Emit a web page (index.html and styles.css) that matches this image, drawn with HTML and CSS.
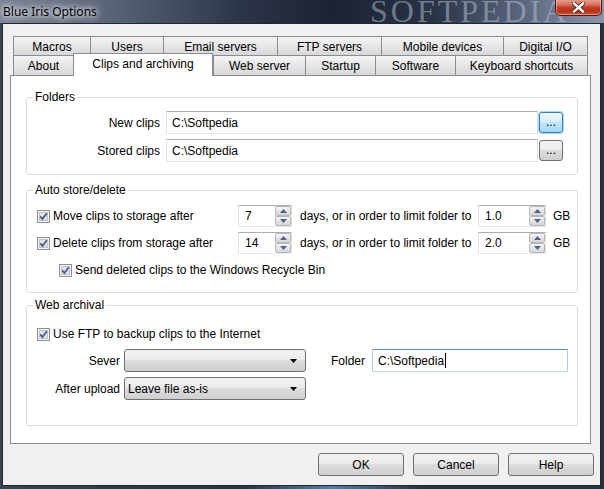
FILE: index.html
```html
<!DOCTYPE html>
<html lang="en">
<head>
    <meta charset="UTF-8">
    <title>Blue Iris Options</title>
<link rel="stylesheet" href="styles.css">
</head>
<body>
<div class="window">
    <div class="titlebar">
        <span class="title">Blue Iris Options</span>
        <span class="watermark">SOFTPEDIA</span>
        <button class="close">
            <svg width="13" height="11" viewBox="0 0 13 11">
                <path d="M2 1.5 L11 9.5 M11 1.5 L2 9.5" stroke="#3a2a28" stroke-width="4.2" stroke-linecap="square"/>
                <path d="M2 1.5 L11 9.5 M11 1.5 L2 9.5" stroke="#fff" stroke-width="2.4" stroke-linecap="square"/>
            </svg>
        </button>
    </div>

    <div class="client">
        <div class="tabs">
            <div class="tab-row top">
                <div class="tab">Macros</div>
                <div class="tab">Users</div>
                <div class="tab">Email servers</div>
                <div class="tab">FTP servers</div>
                <div class="tab">Mobile devices</div>
                <div class="tab last">Digital I/O</div>
            </div>
            <div class="tab-row bottom">
                <div class="tab">About</div>
                <div class="tab selected">Clips and archiving</div>
                <div class="tab">Web server</div>
                <div class="tab">Startup</div>
                <div class="tab">Software</div>
                <div class="tab last">Keyboard shortcuts</div>
            </div>
        </div>

        <div class="panel">
            <fieldset class="group folders">
                <legend>Folders</legend>
                <div class="field-row">
                    <span class="field-label">New clips</span>
                    <div class="textbox">C:\Softpedia</div>
                    <button class="browse focus">...</button>
                </div>
                <div class="field-row">
                    <span class="field-label">Stored clips</span>
                    <div class="textbox">C:\Softpedia</div>
                    <button class="browse">...</button>
                </div>
            </fieldset>

            <fieldset class="group auto">
                <legend>Auto store/delete</legend>
                <div class="group-body">
                    <div class="spin-row">
                        <label class="check">
                            <svg class="box" width="13" height="13" viewBox="0 0 13 13"><rect x="0.5" y="0.5" width="12" height="12" fill="#f4f4f4" stroke="#8e8f8f"/><rect x="2.5" y="2.5" width="8" height="8" fill="#e2e2e2" stroke="#c4c4c4"/><path d="M3.3 6.4 L5.4 9 L9.8 3.2" fill="none" stroke="#3f5a9a" stroke-width="1.7"/></svg>
                            Move clips to storage after
                        </label>
                        <div class="spin"><span class="val">7</span><span class="arrows"><span class="spin-btn"><svg width="7" height="4" viewBox="0 0 7 4"><path d="M0 4 L3.5 0 L7 4Z" fill="#4f628f"/></svg></span><span class="spin-btn"><svg width="7" height="4" viewBox="0 0 7 4"><path d="M0 0 L3.5 4 L7 0Z" fill="#4f628f"/></svg></span></span></div>
                        <span class="days">days, or in order to limit folder to</span>
                        <div class="spin wide"><span class="val">1.0</span><span class="arrows"><span class="spin-btn"><svg width="7" height="4" viewBox="0 0 7 4"><path d="M0 4 L3.5 0 L7 4Z" fill="#4f628f"/></svg></span><span class="spin-btn"><svg width="7" height="4" viewBox="0 0 7 4"><path d="M0 0 L3.5 4 L7 0Z" fill="#4f628f"/></svg></span></span></div>
                        <span class="unit">GB</span>
                    </div>
                    <div class="spin-row">
                        <label class="check">
                            <svg class="box" width="13" height="13" viewBox="0 0 13 13"><rect x="0.5" y="0.5" width="12" height="12" fill="#f4f4f4" stroke="#8e8f8f"/><rect x="2.5" y="2.5" width="8" height="8" fill="#e2e2e2" stroke="#c4c4c4"/><path d="M3.3 6.4 L5.4 9 L9.8 3.2" fill="none" stroke="#3f5a9a" stroke-width="1.7"/></svg>
                            Delete clips from storage after
                        </label>
                        <div class="spin"><span class="val">14</span><span class="arrows"><span class="spin-btn"><svg width="7" height="4" viewBox="0 0 7 4"><path d="M0 4 L3.5 0 L7 4Z" fill="#4f628f"/></svg></span><span class="spin-btn"><svg width="7" height="4" viewBox="0 0 7 4"><path d="M0 0 L3.5 4 L7 0Z" fill="#4f628f"/></svg></span></span></div>
                        <span class="days">days, or in order to limit folder to</span>
                        <div class="spin wide"><span class="val">2.0</span><span class="arrows"><span class="spin-btn"><svg width="7" height="4" viewBox="0 0 7 4"><path d="M0 4 L3.5 0 L7 4Z" fill="#4f628f"/></svg></span><span class="spin-btn"><svg width="7" height="4" viewBox="0 0 7 4"><path d="M0 0 L3.5 4 L7 0Z" fill="#4f628f"/></svg></span></span></div>
                        <span class="unit">GB</span>
                    </div>
                    <label class="check recycle">
                        <svg class="box" width="13" height="13" viewBox="0 0 13 13"><rect x="0.5" y="0.5" width="12" height="12" fill="#f4f4f4" stroke="#8e8f8f"/><rect x="2.5" y="2.5" width="8" height="8" fill="#e2e2e2" stroke="#c4c4c4"/><path d="M3.3 6.4 L5.4 9 L9.8 3.2" fill="none" stroke="#3f5a9a" stroke-width="1.7"/></svg>
                        Send deleted clips to the Windows Recycle Bin
                    </label>
                </div>
            </fieldset>

            <fieldset class="group web">
                <legend>Web archival</legend>
                <div class="group-body">
                    <label class="check">
                        <svg class="box" width="13" height="13" viewBox="0 0 13 13"><rect x="0.5" y="0.5" width="12" height="12" fill="#f4f4f4" stroke="#8e8f8f"/><rect x="2.5" y="2.5" width="8" height="8" fill="#e2e2e2" stroke="#c4c4c4"/><path d="M3.3 6.4 L5.4 9 L9.8 3.2" fill="none" stroke="#3f5a9a" stroke-width="1.7"/></svg>
                        Use FTP to backup clips to the Internet
                    </label>
                    <div class="web-row first">
                        <span class="field-label">Sever</span>
                        <div class="select"><span></span><svg width="7" height="4" viewBox="0 0 7 4"><path d="M0 0 L3.5 4 L7 0Z" fill="#000"/></svg></div>
                        <span class="folder-label">Folder</span>
                        <div class="textbox active">C:\Softpedia<span class="caret"></span></div>
                    </div>
                    <div class="web-row">
                        <span class="field-label">After upload</span>
                        <div class="select"><span>Leave file as-is</span><svg width="7" height="4" viewBox="0 0 7 4"><path d="M0 0 L3.5 4 L7 0Z" fill="#000"/></svg></div>
                    </div>
                </div>
            </fieldset>
        </div>

        <div class="actions">
            <button class="btn">OK</button>
            <button class="btn">Cancel</button>
            <button class="btn">Help</button>
        </div>
    </div>
</div>
</body>
</html>
```

FILE: styles.css
```css
*{box-sizing:border-box;}
body{margin:0;width:604px;height:489px;overflow:hidden;font:12px "Liberation Sans",Arial,sans-serif;color:#000;background:#2a303c;}

.window{height:489px;display:flex;flex-direction:column;
    background:linear-gradient(90deg,#3b4252 0%,#2a303c 40%,#5a7da0 55%,#2a303c 70%,#2a303c 100%);}

/* title bar */
.titlebar{height:23px;flex:none;position:relative;display:flex;align-items:center;padding-left:3px;overflow:hidden;
    background:linear-gradient(90deg,#7b8394 0%,#5a6477 18%,#2c3448 40%,#1b2232 55%,#2a3447 72%,#5f6c84 88%,#8a96aa 100%);}
.title{font:12px "Noto Sans",sans-serif;position:relative;z-index:1;text-shadow:0 0 5px #fff,0 0 9px rgba(255,255,255,.85),0 0 14px rgba(255,255,255,.6);}
.watermark{position:absolute;left:370px;top:-5px;font:32px "Liberation Serif",serif;line-height:32px;letter-spacing:3px;color:rgba(185,196,214,.5);}
.close{position:absolute;right:2px;top:-1px;width:47px;height:17px;border:1px solid #4d1d14;border-top:0;border-radius:0 0 5px 5px;padding:0;display:flex;align-items:center;justify-content:center;z-index:1;
    background:linear-gradient(#e3a595 0%,#d77461 35%,#c2391f 55%,#b8341c 80%,#d25a38 100%);box-shadow:inset 0 0 0 1px rgba(255,220,210,.45);}

/* client */
.client{flex:1;margin:0 3px 3px 2px;border:1px solid #23282f;background:#f0f0f0;display:flex;flex-direction:column;}

.tabs{padding:12px 0 0 10px;}
.tab-row{display:grid;}
.tab-row.top{grid-template-columns:77px 73px 114px 104px 122px 85px;height:19px;}
.tab-row.bottom{grid-template-columns:60px 140px 92px 70px 80px 133px;height:20px;}
.tab{border:1px solid #898c95;border-right:0;border-bottom:0;display:flex;align-items:center;justify-content:center;padding-top:1px;
    background:linear-gradient(#f4f4f4,#e6e6e6 50%,#d8d8d8);white-space:nowrap;}
.tab.last{border-right:1px solid #898c95;}
.tab.selected{background:#fff;margin-top:-2px;margin-bottom:-1px;border-right:1px solid #898c95;position:relative;z-index:2;align-items:flex-start;padding-top:3px;}

.panel{margin-left:7px;width:581px;height:369px;border:1px solid #898c95;background:#fff;position:relative;z-index:1;padding-left:15px;}

/* group boxes */
.group{margin:0;width:552px;min-width:0;border:1px solid #d5dfe5;border-radius:3px;padding:0;}
.group legend{margin-left:6px;padding:0 2px;line-height:14px;}
.folders{margin-top:14px;padding:7px 0 12px;}
.auto{margin-top:8px;padding:8px 0 14px;}
.web{margin-top:5px;padding:14px 0 25px;}
.group-body{padding-left:10px;}

.field-row{display:flex;align-items:center;height:23px;}
.field-row + .field-row{margin-top:5px;}
.folders .field-label{width:133px;text-align:right;margin-right:6px;}

.textbox{width:372px;height:23px;border:1px solid;border-color:#abadb3 #dbdfe6 #e3e9ef #e2e3ea;padding-left:5px;display:flex;align-items:center;background:#fff;}
.textbox.active{width:196px;border-color:#5c93c4 #b3cde4 #c3d8ec #b3cde4;}
.caret{display:inline-block;width:1px;height:15px;background:#000;margin-left:1px;}

.browse{margin-left:1px;width:24px;height:21px;padding:0 0 4px;border:1px solid #707070;border-radius:3px;font:12px "Liberation Sans",Arial,sans-serif;line-height:1;display:flex;align-items:flex-end;justify-content:center;
    background:linear-gradient(#f2f2f2,#ebebeb 45%,#dddddd 50%,#cfcfcf);}
.browse.focus{border-color:#3c7fb1;background:linear-gradient(#eaf6fd,#d9f0fc 45%,#bee6fd 50%,#a7d9f5);box-shadow:0 0 0 1px #9fdcf7;}

/* checkboxes and spinners */
.check{display:flex;align-items:center;height:16px;white-space:nowrap;}
.check .box{margin-right:3px;flex:none;}
.check.recycle{margin:8px 0 0 22px;}

.spin-row{display:grid;grid-template-columns:201px 54px 186px 68px auto;height:22px;align-items:center;}
.spin-row + .spin-row{margin-top:5px;}
.spin{height:22px;border:1px solid;border-color:#abadb3 #dbdfe6 #e3e9ef #e2e3ea;display:flex;background:#fff;}
.spin .val{flex:1;padding:3px 0 0 6px;}
.arrows{width:16px;display:flex;flex-direction:column;justify-content:space-between;}
.spin-btn{height:10px;border:1px solid #b7b7b7;border-radius:2px;display:flex;align-items:center;justify-content:center;background:linear-gradient(#f7f7f7,#e4e4e4 50%,#d6d6d6);}
.days{padding-left:8px;white-space:nowrap;}
.unit{padding-left:7px;}

/* web archival */
.web-row{display:flex;align-items:center;height:23px;}
.web-row.first{margin-top:7px;}
.web-row + .web-row{margin-top:5px;}
.web .field-label{width:83px;text-align:right;margin-right:4px;}
.select{width:182px;height:23px;border:1px solid #707070;border-radius:3px;padding:0 8px 0 3px;display:flex;align-items:center;justify-content:space-between;
    background:linear-gradient(#f2f2f2,#ebebeb 45%,#dddddd 50%,#cfcfcf);}
.folder-label{margin:0 7px 0 25px;}

/* dialog buttons */
.actions{display:flex;justify-content:flex-end;gap:9px;padding-right:6px;margin-top:9px;}
.btn{width:86px;height:23px;border:1px solid #707070;border-radius:3px;font:12px "Liberation Sans",Arial,sans-serif;color:#000;padding:0;
    background:linear-gradient(#f2f2f2,#ebebeb 45%,#dddddd 50%,#cfcfcf);}
```
